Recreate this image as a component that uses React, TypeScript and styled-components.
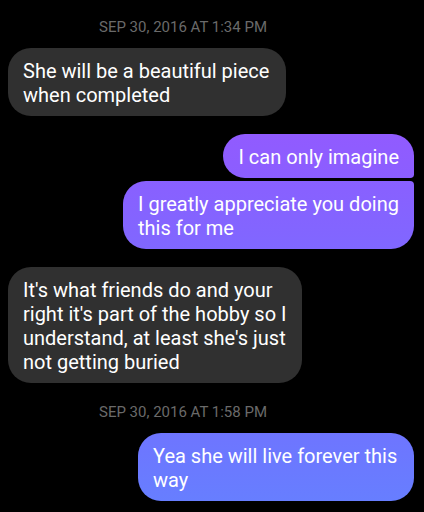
import React from "react";
import styled, { createGlobalStyle } from "styled-components";

const GlobalStyle = createGlobalStyle`
  * { box-sizing: border-box; }
  html { background: #000; }
  body { margin: 0; background: #000; font-family: Roboto, sans-serif; }
`;

const Thread = styled.main`
  display: flex;
  flex-direction: column;
  padding: 16px 10px 10px 8px;
`;

const Timestamp = styled.time`
  align-self: center;
  margin: 2px 0 12px;
  padding-right: 56px;
  font-size: 15px;
  line-height: 18px;
  color: #6a6a6a;
`;

const Group = styled.section`
  display: flex;
  flex-direction: column;
  gap: 3px;

  & + & {
    margin-top: 18px;
  }

  & + ${Timestamp} {
    margin-top: 20px;
  }
`;

const Bubble = styled.p<{ $width: string }>`
  max-width: ${(p) => p.$width};
  margin: 0;
  padding: 11px 15px 9px;
  border-radius: 23px;
  color: #fff;
  font-size: 20px;
  line-height: 24px;
`;

const ReceivedBubble = styled(Bubble)`
  align-self: flex-start;
  background: #303030;
`;

const SentBubble = styled(Bubble)<{ $from: string; $to: string; $joined?: "above" | "below" }>`
  align-self: flex-end;
  background: linear-gradient(${(p) => p.$from}, ${(p) => p.$to});
  ${(p) => p.$joined === "above" && "border-top-right-radius: 4px;"}
  ${(p) => p.$joined === "below" && "border-bottom-right-radius: 4px;"}
`;

export default function App() {
  return (
    <Thread>
      <GlobalStyle />
      <Timestamp>SEP 30, 2016 AT 1:34 PM</Timestamp>
      <Group>
        <ReceivedBubble $width="278px">She will be a beautiful piece when completed</ReceivedBubble>
      </Group>
      <Group>
        <SentBubble $width="292px" $from="#915bff" $to="#8b5eff" $joined="below">
          I can only imagine
        </SentBubble>
        <SentBubble $width="291px" $from="#8960ff" $to="#8067ff" $joined="above">
          I greatly appreciate you doing this for me
        </SentBubble>
      </Group>
      <Group>
        <ReceivedBubble $width="294px">
          It's what friends do and your right it's part of the hobby so I understand, at least she's just not getting buried
        </ReceivedBubble>
      </Group>
      <Timestamp>SEP 30, 2016 AT 1:58 PM</Timestamp>
      <Group>
        <SentBubble $width="276px" $from="#6e75ff" $to="#677eff">
          Yea she will live forever this way
        </SentBubble>
      </Group>
    </Thread>
  );
}
